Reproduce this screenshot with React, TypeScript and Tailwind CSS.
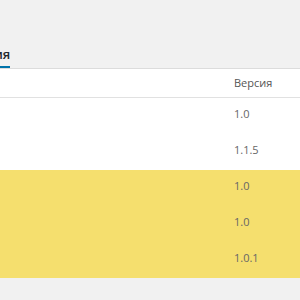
const rows = [
  { version: "1.0", highlight: false },
  { version: "1.1.5", highlight: false },
  { version: "1.0", highlight: true },
  { version: "1.0", highlight: true },
  { version: "1.0.1", highlight: true },
];

export default function App() {
  return (
    <div className="min-h-[300px] w-[300px] overflow-hidden bg-[#f1f1f1] font-['Open_Sans',sans-serif]">
      {/* Tabs, scrolled so only the end of the active one shows */}
      <div className="flex h-[69px] items-end overflow-hidden border-b border-[#dcdcdc]">
        <div className="-mb-px -ml-[73px] shrink-0 border-b-[3px] border-[#0073aa] pb-[5px] text-[13px] font-semibold leading-none text-[#23282d]">
          Расширения
        </div>
      </div>

      {/* Table */}
      <div className="bg-white">
        <div className="flex h-[29px] items-center border-b border-[#e1e1e1] text-[11px] text-[#555]">
          <div className="flex-1" />
          <div className="w-[66px]">Версия</div>
        </div>
        {rows.map((row, i) => (
          <div
            key={i}
            className={`flex h-[36px] items-center pb-[3px] text-[11px] text-[#666] ${
              row.highlight ? "bg-[#f5df6e]" : "bg-white"
            }`}
          >
            <div className="flex-1" />
            <div className="w-[66px]">{row.version}</div>
          </div>
        ))}
      </div>
    </div>
  );
}
